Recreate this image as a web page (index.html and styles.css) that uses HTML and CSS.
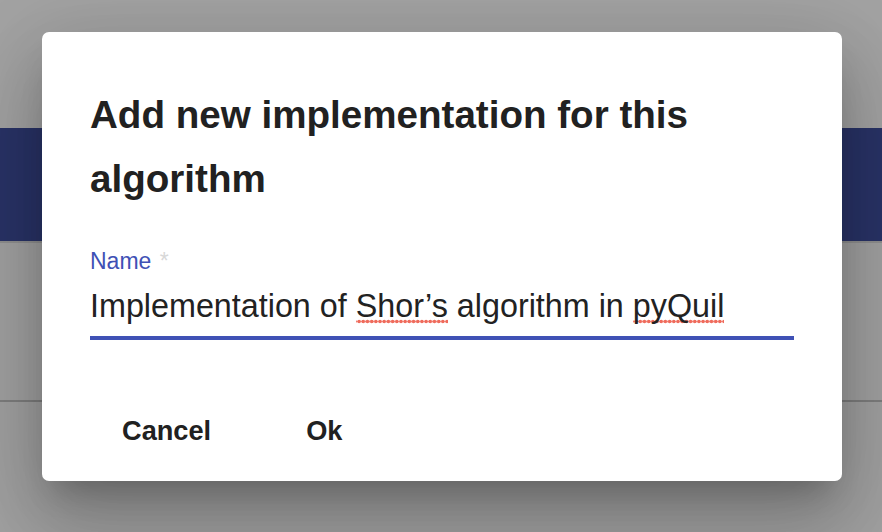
FILE: index.html
```html
<!DOCTYPE html>
<html lang="en">
<head>
<meta charset="utf-8">
<title>Add new implementation</title>
<link rel="stylesheet" href="styles.css">
</head>
<body>
<div class="page">
  <div class="page-top"></div>
  <div class="page-band"></div>
  <div class="page-content"></div>
  <div class="page-rest"></div>
</div>
<div class="overlay">
  <div class="dialog" role="dialog">
    <h1 class="dialog-title">Add new implementation for this algorithm</h1>
    <div class="field">
      <div class="field-label">Name <span class="req">*</span></div>
      <div class="field-input"><span>Implementation of </span><span class="spell">Shor’s</span><span> algorithm in </span><span class="spell">pyQuil</span></div>
    </div>
    <div class="actions">
      <button class="btn">Cancel</button>
      <button class="btn">Ok</button>
    </div>
  </div>
</div>
</body>
</html>
```

FILE: styles.css
```css
html, body {
  margin: 0;
  padding: 0;
  height: 100%;
}
body {
  background: #a3a3a3;
  font-family: "Liberation Sans", Arial, Helvetica, sans-serif;
  overflow: hidden;
}
.page {
  display: flex;
  flex-direction: column;
  height: 100%;
}
.page-top {
  height: 128px;
  background: #a3a3a3;
}
.page-band {
  height: 113px;
  background: #293367;
  border-bottom: 2px solid #8f8f8f;
}
.page-content {
  height: 157px;
  background: #a1a1a1;
  border-bottom: 2px solid #7e7e7e;
}
.page-rest {
  flex: 1;
  background: #a1a1a1;
}
.overlay {
  position: absolute;
  inset: 0;
}
.dialog {
  position: absolute;
  left: 42px;
  top: 32px;
  width: 800px;
  height: 449px;
  box-sizing: border-box;
  background: #fff;
  border-radius: 7px;
  padding: 51px 48px 0 48px;
  display: flex;
  flex-direction: column;
  box-shadow: 0 21px 29px -13px rgba(0,0,0,0.22),
              0 46px 73px 6px rgba(0,0,0,0.15),
              0 17px 88px 15px rgba(0,0,0,0.12);
}
.dialog-title {
  margin: 0;
  font-size: 38.6px;
  line-height: 64px;
  font-weight: bold;
  color: #212121;
  width: 640px;
}
.field {
  margin-top: 36px;
  width: 704px;
}
.field-label {
  font-size: 23px;
  line-height: 28px;
  color: #3f51b5;
}
.req {
  color: #d8d8d8;
  margin-left: 2px;
}
.field-input {
  margin-top: 11px;
  font-size: 32.3px;
  line-height: 40px;
  color: #222;
  padding-bottom: 10px;
  border-bottom: 4px solid #3f51b5;
  white-space: nowrap;
}
.spell {
  background-image: radial-gradient(circle, #ef6b5c 1.6px, transparent 2.1px);
  background-size: 4.2px 5px;
  background-repeat: repeat-x;
  background-position: 1px 100%;
}
.actions {
  margin-top: 55px;
  display: flex;
  gap: 31px;
}
.btn {
  font-family: inherit;
  font-size: 27.2px;
  font-weight: bold;
  line-height: 72px;
  height: 72px;
  padding: 0 32px;
  margin: 0;
  border: none;
  background: transparent;
  color: #212121;
  cursor: pointer;
}
```
